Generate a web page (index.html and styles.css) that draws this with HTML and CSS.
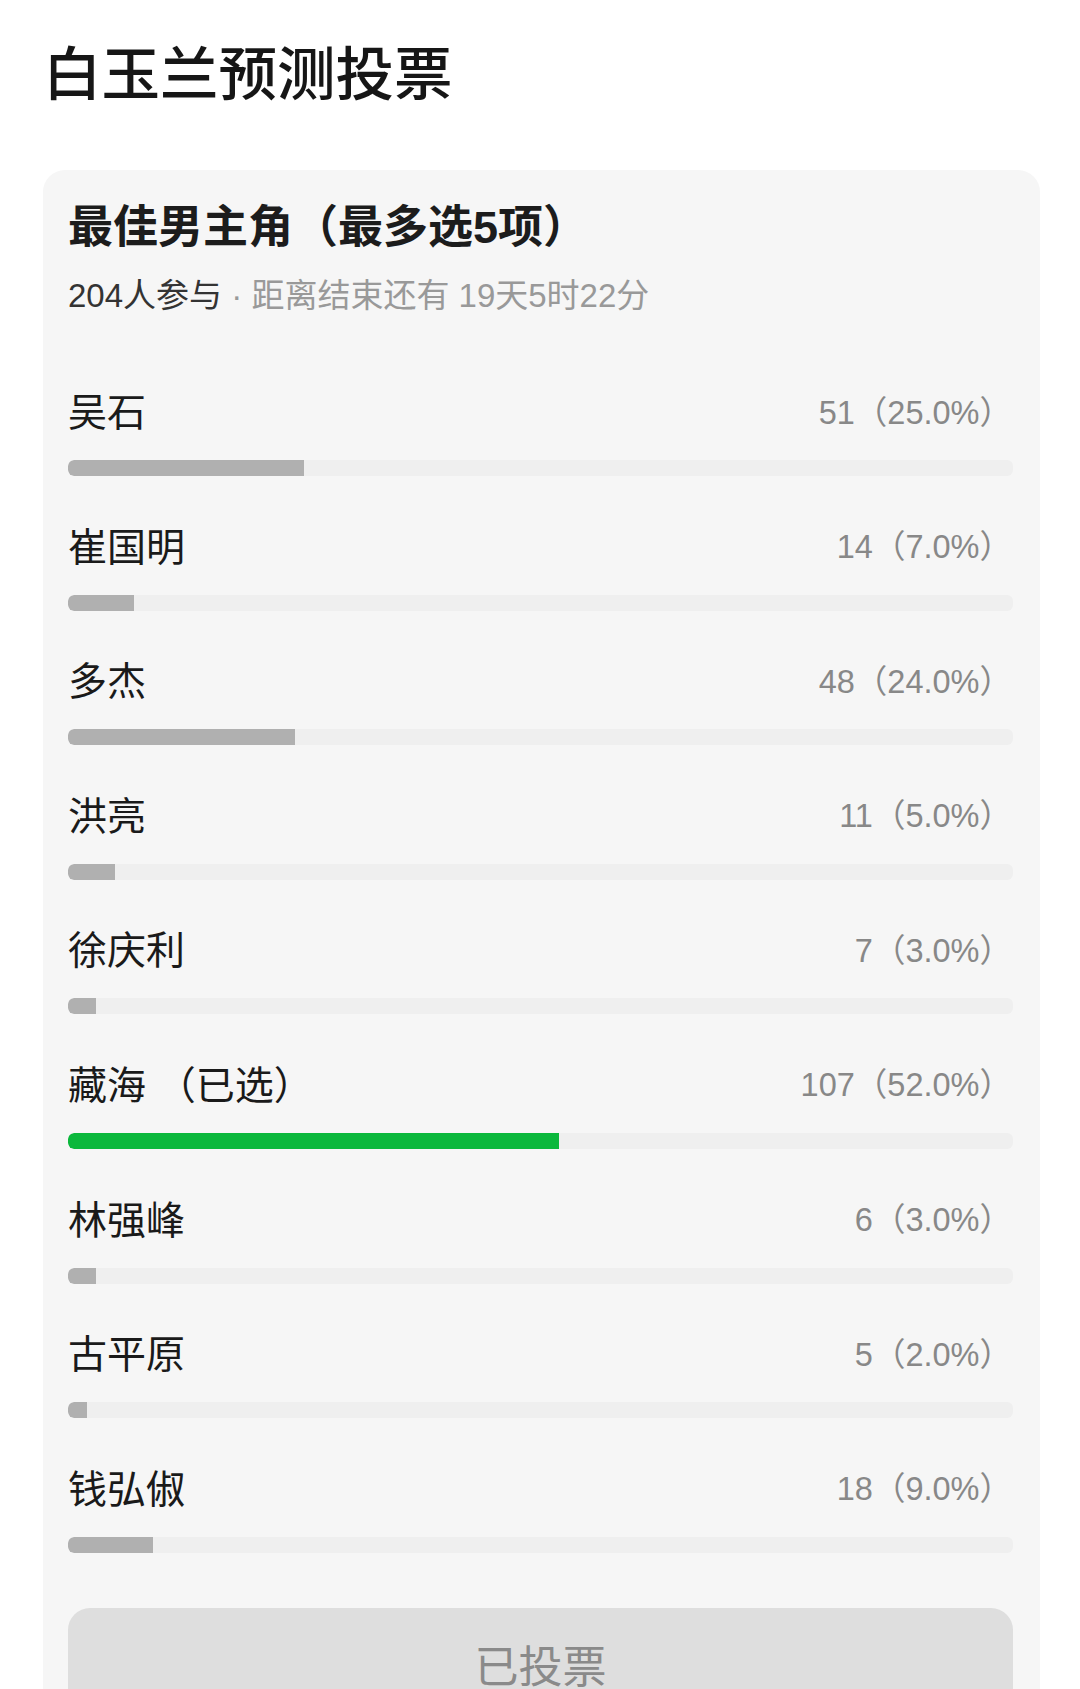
FILE: index.html
```html
<!DOCTYPE html>
<html lang="zh-CN">

<head>
    <meta charset="UTF-8">
    <meta name="viewport" content="width=device-width, initial-scale=1.0">
    <title>白玉兰预测投票</title>
    <link rel="stylesheet" href="styles.css">
</head>

<body>
    <div class="page">
        <h1 class="page-title">白玉兰预测投票</h1>

        <div class="poll-card">
            <h2 class="poll-title">最佳男主角（最多选5项）</h2>
            <p class="poll-meta"><span class="meta-count">204人参与</span> · 距离结束还有 19天5时22分</p>

            <div class="poll-list">
                <div class="poll-item">
                    <div class="item-head">
                        <span class="item-name">吴石</span>
                        <span class="item-count">51（25.0%）</span>
                    </div>
                    <div class="bar-track"><div class="bar-fill" style="width: 25%"></div></div>
                </div>

                <div class="poll-item">
                    <div class="item-head">
                        <span class="item-name">崔国明</span>
                        <span class="item-count">14（7.0%）</span>
                    </div>
                    <div class="bar-track"><div class="bar-fill" style="width: 7%"></div></div>
                </div>

                <div class="poll-item">
                    <div class="item-head">
                        <span class="item-name">多杰</span>
                        <span class="item-count">48（24.0%）</span>
                    </div>
                    <div class="bar-track"><div class="bar-fill" style="width: 24%"></div></div>
                </div>

                <div class="poll-item">
                    <div class="item-head">
                        <span class="item-name">洪亮</span>
                        <span class="item-count">11（5.0%）</span>
                    </div>
                    <div class="bar-track"><div class="bar-fill" style="width: 5%"></div></div>
                </div>

                <div class="poll-item">
                    <div class="item-head">
                        <span class="item-name">徐庆利</span>
                        <span class="item-count">7（3.0%）</span>
                    </div>
                    <div class="bar-track"><div class="bar-fill" style="width: 3%"></div></div>
                </div>

                <div class="poll-item">
                    <div class="item-head">
                        <span class="item-name">藏海 （已选）</span>
                        <span class="item-count">107（52.0%）</span>
                    </div>
                    <div class="bar-track"><div class="bar-fill selected" style="width: 52%"></div></div>
                </div>

                <div class="poll-item">
                    <div class="item-head">
                        <span class="item-name">林强峰</span>
                        <span class="item-count">6（3.0%）</span>
                    </div>
                    <div class="bar-track"><div class="bar-fill" style="width: 3%"></div></div>
                </div>

                <div class="poll-item">
                    <div class="item-head">
                        <span class="item-name">古平原</span>
                        <span class="item-count">5（2.0%）</span>
                    </div>
                    <div class="bar-track"><div class="bar-fill" style="width: 2%"></div></div>
                </div>

                <div class="poll-item">
                    <div class="item-head">
                        <span class="item-name">钱弘俶</span>
                        <span class="item-count">18（9.0%）</span>
                    </div>
                    <div class="bar-track"><div class="bar-fill" style="width: 9%"></div></div>
                </div>
            </div>

            <button class="vote-button" disabled>已投票</button>
        </div>
    </div>
</body>

</html>
```

FILE: styles.css
```css
body {
    margin: 0;
    background: #fff;
    font-family: "Liberation Sans", "Noto Sans CJK SC", sans-serif;
    color: #1a1a1a;
}

.page {
    padding: 40px 40px 0 43px;
}

.page-title {
    margin: 0 0 60px;
    font-size: 58.5px;
    line-height: 70px;
    font-weight: 500;
    color: #161616;
}

.poll-card {
    background: #f6f6f6;
    border-radius: 22px;
    padding: 33px 27px 0 25px;
}

.poll-title {
    margin: 0;
    font-size: 45px;
    line-height: 50px;
    font-weight: 700;
    color: #1c1c1c;
}

.poll-meta {
    margin: 23px 0 0;
    font-size: 33px;
    line-height: 40px;
    color: #999;
}

.meta-count {
    color: #333;
}

.poll-list {
    margin-top: 69px;
}

.poll-item {
    margin-bottom: 43.6px;
}

.item-head {
    display: flex;
    justify-content: space-between;
    align-items: center;
    height: 48px;
    padding-right: 1px;
}

.item-name {
    font-size: 39px;
    color: #1a1a1a;
}

.item-count {
    font-size: 32.5px;
    color: #888;
}

.bar-track {
    margin-top: 27px;
    height: 16px;
    border-radius: 6px;
    background: #efefef;
    overflow: hidden;
}

.bar-fill {
    height: 100%;
    background: #b0b0b0;
    border-radius: 6px 0 0 6px;
}

.bar-fill.selected {
    background: #0bb83c;
}

.vote-button {
    display: block;
    width: 100%;
    height: 112px;
    margin-top: 55px;
    border: none;
    border-radius: 22px;
    background: #dedede;
    color: #8a8a8a;
    font-family: "Noto Sans CJK SC", sans-serif;
    font-size: 44px;
}
```
